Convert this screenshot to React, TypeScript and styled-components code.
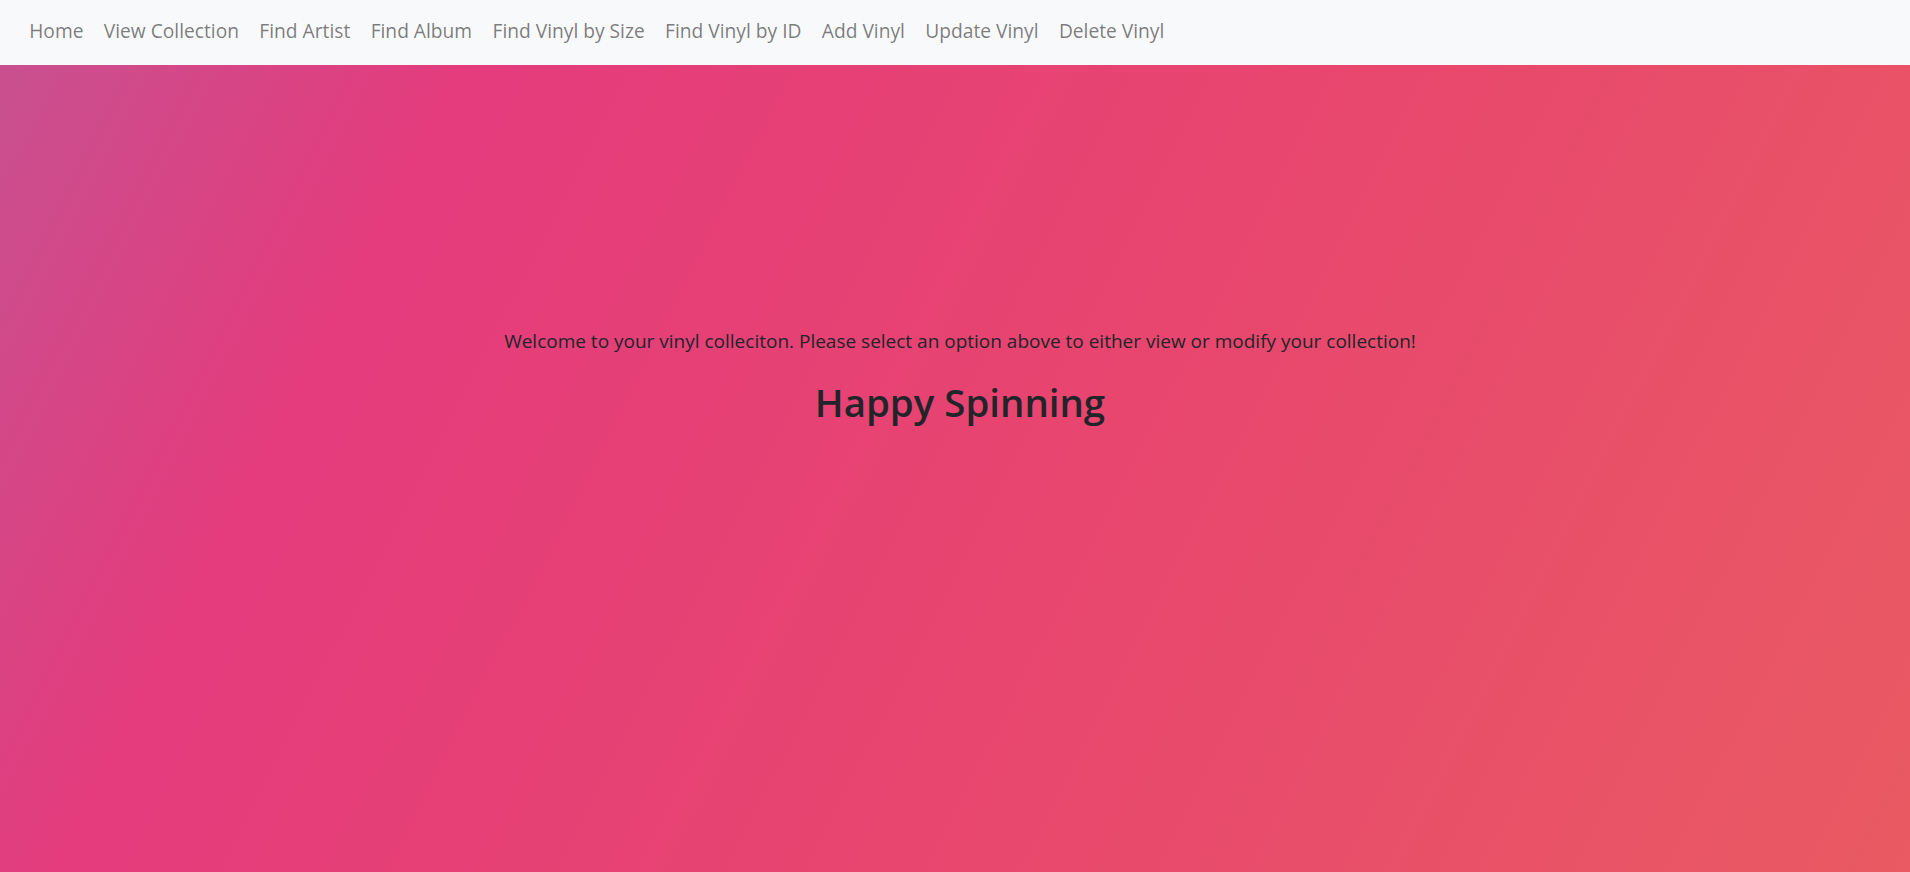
import React from "react";
import styled, { createGlobalStyle } from "styled-components";

const GlobalStyle = createGlobalStyle`
  html, body {
    margin: 0;
    padding: 0;
  }
  body {
    font-family: "Open Sans", "Noto Sans", "Liberation Sans", sans-serif;
    color: #212529;
    background: #f8f9fa;
  }
`;

const Navbar = styled.nav`
  display: flex;
  align-items: center;
  height: 65px;
  padding: 0 19px 4px;
  background: #f8f9fa;
  box-sizing: border-box;
`;

const NavList = styled.ul`
  display: flex;
  list-style: none;
  margin: 0;
  padding: 0;
`;

const NavLink = styled.a`
  display: block;
  padding: 0 10.2px;
  font-size: 19.2px;
  line-height: 28px;
  color: rgba(0, 0, 0, 0.52);
  text-decoration: none;
  cursor: pointer;

  &:hover {
    color: rgba(0, 0, 0, 0.7);
  }
`;

const Main = styled.main`
  min-height: calc(100vh - 65px);
  box-sizing: border-box;
  padding: 262px 0 0 10px;
  background: linear-gradient(
    117deg,
    #c8508f 0%,
    #e43c7d 20%,
    #e8456f 55%,
    #e95a62 100%
  );
  text-align: center;
`;

const Welcome = styled.p`
  margin: 0 0 24px;
  font-size: 19px;
  line-height: 28px;
`;

const Title = styled.h2`
  margin: 0;
  font-size: 38.4px;
  font-weight: 600;
  line-height: 46px;
`;

const links = [
  "Home",
  "View Collection",
  "Find Artist",
  "Find Album",
  "Find Vinyl by Size",
  "Find Vinyl by ID",
  "Add Vinyl",
  "Update Vinyl",
  "Delete Vinyl",
];

const App: React.FC = () => {
  return (
    <>
      <GlobalStyle />
      <Navbar>
        <NavList>
          {links.map((label) => (
            <li key={label}>
              <NavLink>{label}</NavLink>
            </li>
          ))}
        </NavList>
      </Navbar>
      <Main>
        <Welcome>
          Welcome to your vinyl colleciton. Please select an option above to
          either view or modify your collection!
        </Welcome>
        <Title>Happy Spinning</Title>
      </Main>
    </>
  );
};

export default App;
